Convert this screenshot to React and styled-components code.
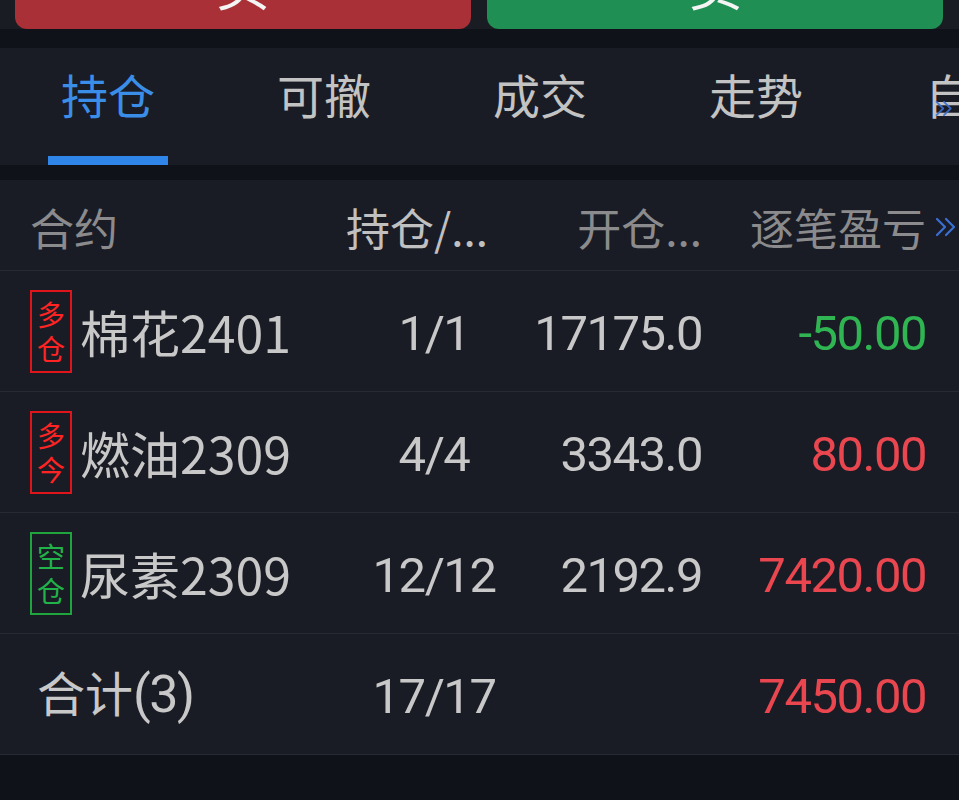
import React from 'react'
import styled, {createGlobalStyle} from 'styled-components'

const GlobalStyle = createGlobalStyle`
    body{
        margin: 0;
        background: #10121a;
        font-family: "Noto Sans CJK SC", "Noto Sans", sans-serif;
    }
`

const tabs = ["持仓", "可撤", "成交", "走势", "自选"]

const positions = [
    {tag: ["多", "仓"], long: true, name: "棉花", code: "2401", qty: "1/1", price: "17175.0", pnl: "-50.00", up: false},
    {tag: ["多", "今"], long: true, name: "燃油", code: "2309", qty: "4/4", price: "3343.0", pnl: "80.00", up: true},
    {tag: ["空", "仓"], long: false, name: "尿素", code: "2309", qty: "12/12", price: "2192.9", pnl: "7420.00", up: true},
]

function Chevrons({size}){
    return(
        <svg width={size} height={size * 1.25} viewBox="0 0 24 30" fill="none" stroke="#3b6fd4" strokeWidth="2.2" strokeLinecap="round" strokeLinejoin="round">
            <polyline points="3,7 11,15 3,23"/>
            <polyline points="12,7 20,15 12,23"/>
        </svg>
    )
}

export default function App(){
    return(
        <Page>
            <GlobalStyle/>
            <TradeBar>
                <TradeButton color="#a93036">买</TradeButton>
                <TradeButton color="#1f8f53">卖</TradeButton>
            </TradeBar>
            <Tabs>
                {tabs.map((t, i) => (
                    <Tab key={t}>
                        <TabLabel active={i === 0}>{t}</TabLabel>
                        <Indicator active={i === 0}/>
                    </Tab>
                ))}
                <MoreTabs><Chevrons size={20}/></MoreTabs>
            </Tabs>
            <Table>
                <HeaderRow>
                    <HeadCell>合约</HeadCell>
                    <HeadCell light left>持仓/...</HeadCell>
                    <HeadCell right>开仓...</HeadCell>
                    <HeadCell right>逐笔盈亏</HeadCell>
                    <More><Chevrons size={24}/></More>
                </HeaderRow>
                {positions.map(p => (
                    <Row key={p.name}>
                        <Contract>
                            <Tag long={p.long}>
                                <span>{p.tag[0]}</span>
                                <span>{p.tag[1]}</span>
                            </Tag>
                            <Name>{p.name}{p.code}</Name>
                        </Contract>
                        <Num center>{p.qty}</Num>
                        <Num right>{p.price}</Num>
                        <Num right color={p.up ? "#e9464f" : "#2fb552"}>{p.pnl}</Num>
                    </Row>
                ))}
                <Row>
                    <Total>合计<Paren>(3)</Paren></Total>
                    <Num center>17/17</Num>
                    <Num right></Num>
                    <Num right color="#e9464f">7450.00</Num>
                </Row>
            </Table>
        </Page>
    )
}

const Page = styled.div`
    width: 959px;
    min-height: 800px;
    background: #10121a;
`
const TradeBar = styled.div`
    height: 29px;
    overflow: hidden;
    background: #1a1c24;
    display: flex;
    align-items: flex-end;
    gap: 16px;
    padding: 0 16px 0 15px;
    margin-bottom: 19px;
`
const TradeButton = styled.div`
    flex: 1;
    height: 100px;
    flex-shrink: 0;
    background: ${props => props.color};
    border-radius: 0 0 12px 12px;
    display: flex;
    align-items: flex-end;
    justify-content: center;
    padding-bottom: 19px;
    box-sizing: border-box;
    color: #f4f4f4;
    font-size: 54px;
    line-height: 1;
`
const Tabs = styled.div`
    position: relative;
    height: 117px;
    background: #1a1c25;
    display: flex;
    overflow: hidden;
    margin-bottom: 15px;
`
const Tab = styled.div`
    width: 216px;
    flex-shrink: 0;
    display: flex;
    flex-direction: column;
    align-items: center;
    justify-content: space-between;
    padding-top: 22px;
    box-sizing: border-box;
`
const TabLabel = styled.div`
    font-size: 47px;
    line-height: 48px;
    white-space: nowrap;
    color: ${props => props.active ? "#3a8ee8" : "#c3c3c3"};
`
const Indicator = styled.div`
    width: 120px;
    height: 9px;
    background: ${props => props.active ? "#2f86e8" : "transparent"};
`
const MoreTabs = styled.div`
    position: absolute;
    right: 5px;
    top: 48px;
    opacity: 0.9;
`
const Table = styled.div`
    background: #1a1c25;
`
const grid = `
    display: grid;
    grid-template-columns: 308px 192px 172px 224px 33px;
    padding-left: 30px;
    align-items: center;
    border-bottom: 1px solid #272a33;
`
const HeaderRow = styled.div`
    ${grid}
    height: 91px;
    padding-top: 4px;
    box-sizing: border-box;
`
const HeadCell = styled.div`
    font-size: 44px;
    line-height: 1;
    white-space: nowrap;
    color: ${props => props.light ? "#c0c0c0" : "#8b8b8d"};
    text-align: ${props => props.right ? "right" : "left"};
    padding-left: ${props => props.left ? "8px" : "0"};
`
const More = styled.div`
    display: flex;
    justify-content: flex-end;
    padding-right: 1px;
`
const Row = styled.div`
    ${grid}
    height: 121px;
    box-sizing: border-box;
`
const Contract = styled.div`
    display: flex;
    align-items: center;
    gap: 8px;
`
const Tag = styled.div`
    width: 42px;
    height: 83px;
    box-sizing: border-box;
    border: 2px solid ${props => props.long ? "#e0141b" : "#1ea53c"};
    color: ${props => props.long ? "#ff2424" : "#22b24a"};
    display: flex;
    flex-direction: column;
    align-items: center;
    justify-content: center;
    font-size: 28px;
    line-height: 34px;
`
const Name = styled.div`
    font-size: 50px;
    line-height: 1;
    color: #c8c8c8;
    white-space: nowrap;
`
const Num = styled.div`
    font-family: Roboto, "Liberation Sans", sans-serif;
    font-size: 49px;
    letter-spacing: -1.5px;
    line-height: 1;
    color: ${props => props.color || "#c8c8c8"};
    text-align: ${props => props.center ? "center" : props.right ? "right" : "left"};
    padding-top: 4px;
`
const Total = styled.div`
    font-size: 48px;
    line-height: 1;
    color: #c8c8c8;
    padding-left: 7px;
    white-space: nowrap;
`
const Paren = styled.span`
    font-family: Roboto, "Liberation Sans", sans-serif;
    font-size: 52px;
    letter-spacing: -1.5px;
`
